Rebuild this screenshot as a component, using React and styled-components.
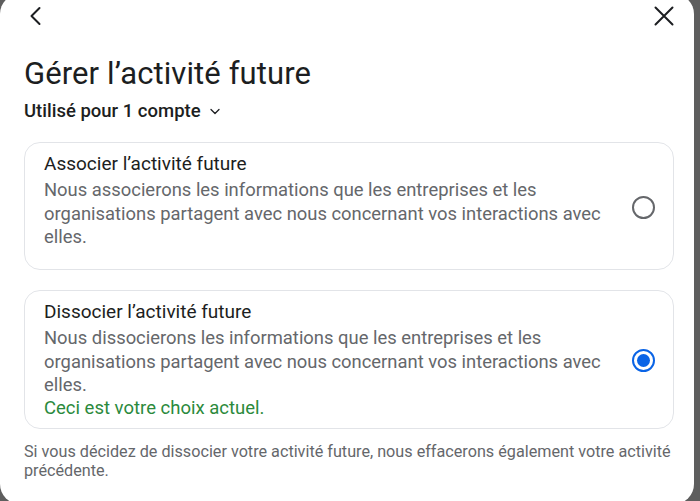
import React from "react";
import styled, { createGlobalStyle } from "styled-components";

const Global = createGlobalStyle`
    html, body {
        margin: 0;
        padding: 0;
        background: #5e5e5e;
        overflow: hidden;
    }
    body {
        font-family: Roboto, "Liberation Sans", sans-serif;
        color: #1c1e21;
    }
`;

const Dialog = styled.div`
    width: 694px;
    height: 510px;
    margin-top: -6px;
    background: #ffffff;
    border-radius: 20px;
    display: flex;
    flex-direction: column;
    overflow: hidden;
`;

const Header = styled.div`
    height: 44px;
    flex-shrink: 0;
    display: flex;
    align-items: center;
    justify-content: space-between;
    padding: 0 18px 0 24px;
`;

const IconButton = styled.button`
    width: 24px;
    height: 24px;
    padding: 0;
    border: none;
    background: none;
    display: flex;
    align-items: center;
    justify-content: center;
    color: #1c1e21;
    cursor: pointer;
`;

const Content = styled.div`
    padding: 0 20px 0 24px;
    display: flex;
    flex-direction: column;
`;

const Title = styled.h1`
    margin: 18px 0 0;
    font-size: 31px;
    line-height: 36px;
    font-weight: 400;
    letter-spacing: 0.1px;
`;

const AccountRow = styled.div`
    margin-top: 8px;
    display: flex;
    align-items: center;
    gap: 8px;
    font-size: 18.5px;
    line-height: 22px;
    font-weight: 500;
`;

const Options = styled.div`
    margin-top: 20px;
    display: flex;
    flex-direction: column;
    gap: 20px;
`;

const Card = styled.label`
    min-height: 128px;
    box-sizing: border-box;
    border: 1px solid #e2e4e8;
    border-radius: 16px;
    padding: 10px 18px 8px 19px;
    display: flex;
    gap: 12px;
    cursor: pointer;
`;

const CardText = styled.div`
    flex: 1;
    display: flex;
    flex-direction: column;
`;

const CardTitle = styled.div`
    font-size: 19px;
    line-height: 22px;
    color: #1c1e21;
    margin-bottom: 3px;
`;

const CardDesc = styled.div`
    font-size: 18.4px;
    line-height: 23.5px;
    color: #65676b;
`;

const Current = styled.div`
    font-size: 18.5px;
    line-height: 23.5px;
    color: #2b8a3c;
`;

const Radio = styled.span`
    align-self: center;
    width: 23px;
    height: 23px;
    flex-shrink: 0;
    box-sizing: border-box;
    border-radius: 50%;
    border: 2px solid ${p => (p.$checked ? "#0a64e6" : "#65676b")};
    display: flex;
    align-items: center;
    justify-content: center;
    &::after {
        content: "";
        width: 13px;
        height: 13px;
        border-radius: 50%;
        background: ${p => (p.$checked ? "#0a64e6" : "transparent")};
    }
`;

const Footer = styled.p`
    margin: 13px 0 0;
    font-size: 16.2px;
    line-height: 19px;
    color: #65676b;
`;

const options = [
    {
        title: "Associer l’activité future",
        desc: "Nous associerons les informations que les entreprises et les organisations partagent avec nous concernant vos interactions avec elles.",
        checked: false
    },
    {
        title: "Dissocier l’activité future",
        desc: "Nous dissocierons les informations que les entreprises et les organisations partagent avec nous concernant vos interactions avec elles.",
        checked: true
    }
];

const App = () => {
    return <>
        <Global />
        <Dialog>
            <Header>
                <IconButton aria-label="Retour">
                    <svg width="24" height="24" viewBox="0 0 24 24" fill="none">
                        <path d="M15.5 4 L7.5 12 L15.5 20" stroke="currentColor" strokeWidth="2" strokeLinecap="round" strokeLinejoin="round" />
                    </svg>
                </IconButton>
                <IconButton aria-label="Fermer">
                    <svg width="24" height="24" viewBox="0 0 24 24" fill="none">
                        <path d="M3.5 3.5 L20.5 20.5 M20.5 3.5 L3.5 20.5" stroke="currentColor" strokeWidth="2" strokeLinecap="round" />
                    </svg>
                </IconButton>
            </Header>
            <Content>
                <Title>Gérer l’activité future</Title>
                <AccountRow>
                    Utilisé pour 1 compte
                    <svg width="12" height="12" viewBox="0 0 12 12" fill="none">
                        <path d="M2 4.5 L6 8.5 L10 4.5" stroke="#1c1e21" strokeWidth="1.3" strokeLinecap="round" strokeLinejoin="round" />
                    </svg>
                </AccountRow>
                <Options>
                    {options.map(o =>
                        <Card key={o.title}>
                            <CardText>
                                <CardTitle>{o.title}</CardTitle>
                                <CardDesc>{o.desc}</CardDesc>
                                {o.checked && <Current>Ceci est votre choix actuel.</Current>}
                            </CardText>
                            <Radio $checked={o.checked} />
                        </Card>
                    )}
                </Options>
                <Footer>
                    Si vous décidez de dissocier votre activité future, nous effacerons également votre activité précédente.
                </Footer>
            </Content>
        </Dialog>
    </>
}

export default App;
